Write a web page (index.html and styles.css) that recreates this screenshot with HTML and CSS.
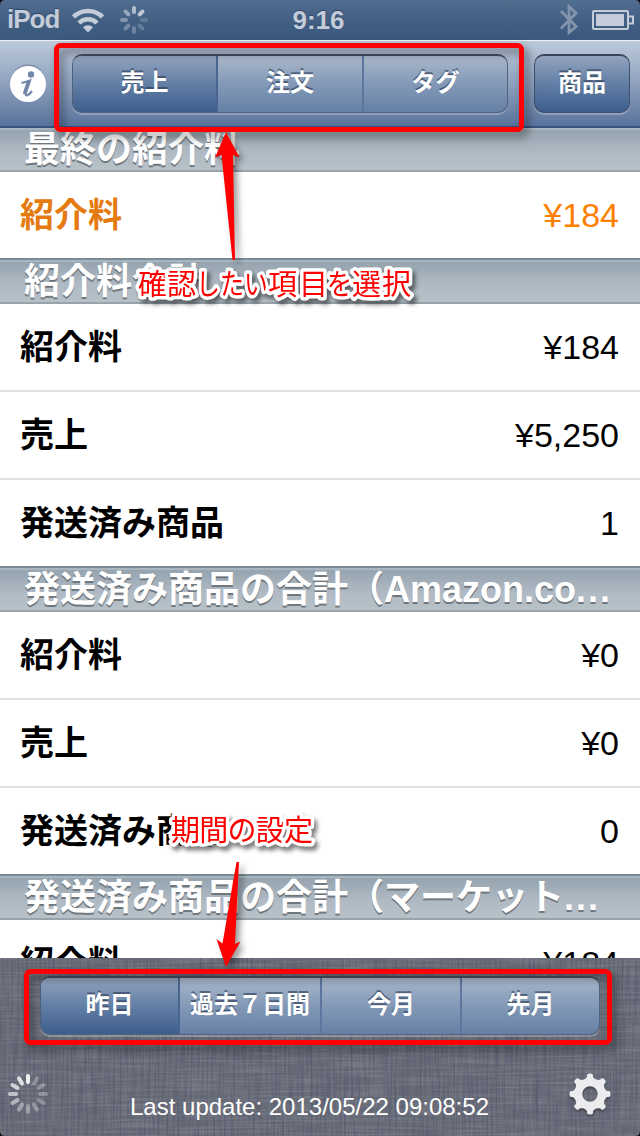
FILE: index.html
```html
<!DOCTYPE html>
<html lang="ja">
<head>
<meta charset="utf-8">
<title>売上</title>
<link rel="stylesheet" href="styles.css">
</head>
<body>
<div class="screen">
  <header class="status">
    <div class="carrier">
      <span class="device">iPod</span>
      <svg class="wifi" width="34" height="26" viewBox="0 0 34 26">
        <g fill="none" stroke="#c3ccd8" stroke-width="4.500">
          <path d="M2.500 10a20.500 20.500 0 0 1 29 0"/>
          <path d="M8 16a12.700 12.700 0 0 1 18 0"/>
        </g>
        <path d="M17 25.500l-5-5.200a7 7 0 0 1 10 0z" fill="#c3ccd8"/>
      </svg>
      <svg class="activity" width="28" height="28" viewBox="-14 -14 28 28">
        <g stroke="#c3ccd8" stroke-width="4" stroke-linecap="round">
          <path d="M0-8V-12" opacity=".85"/>
          <path d="M0-8V-12" opacity=".95" transform="rotate(45)"/>
          <path d="M0-8V-12" opacity=".25" transform="rotate(90)"/>
          <path d="M0-8V-12" opacity=".28" transform="rotate(135)"/>
          <path d="M0-8V-12" opacity=".35" transform="rotate(180)"/>
          <path d="M0-8V-12" opacity=".42" transform="rotate(225)"/>
          <path d="M0-8V-12" opacity=".5" transform="rotate(270)"/>
          <path d="M0-8V-12" opacity=".65" transform="rotate(315)"/>
        </g>
      </svg>
    </div>
    <div class="clock">9:16</div>
    <div class="power">
      <svg width="18" height="32" viewBox="0 0 18 32"><path d="M1 7l15 15.500-7 6V2.500l7 6.500L1 24.500" fill="none" stroke="#8494ad" stroke-width="2.800"/></svg>
      <svg width="42" height="20" viewBox="0 0 42 20"><rect x="1" y="1" width="35" height="18" rx="1" fill="none" stroke="#c3ccd8" stroke-width="2"/><rect x="4" y="4" width="28" height="12" fill="#c3ccd8"/><path d="M37 6.500h4v7h-4" fill="none" stroke="#c3ccd8" stroke-width="2"/></svg>
    </div>
  </header>

  <nav class="navbar">
    <svg class="info" width="36" height="38" viewBox="0 0 36 38">
      <circle cx="18" cy="18" r="17.500" fill="#61718b" opacity=".6"/>
      <circle cx="18" cy="20" r="18" fill="#fff"/>
      <circle cx="21" cy="10.500" r="3.200" fill="#7188aa"/>
      <path d="M11.500 19c2.500-.4 5.500-1.300 8.500-2.500L15.800 29c-1 4.200 2.800 2.600 6.200-2" fill="none" stroke="#7188aa" stroke-width="2.200"/>
      <path d="M18.700 17.500L14.500 30" stroke="#7188aa" stroke-width="3.800"/>
    </svg>
    <div class="segments segments-top">
      <button class="segment active">売上</button>
      <button class="segment">注文</button>
      <button class="segment">タグ</button>
    </div>
    <button class="product">商品</button>
  </nav>

  <main class="list">
    <h2 class="heading"><span>最終の紹介料</span></h2>
    <div class="row earned last"><b>紹介料</b><span>¥184</span></div>
    <h2 class="heading"><span>紹介料合計</span></h2>
    <div class="row"><b>紹介料</b><span>¥184</span></div>
    <div class="row"><b>売上</b><span>¥5,250</span></div>
    <div class="row last"><b>発送済み商品</b><span>1</span></div>
    <h2 class="heading"><span>発送済み商品の合計（Amazon.co<i>...</i></span></h2>
    <div class="row"><b>紹介料</b><span>¥0</span></div>
    <div class="row"><b>売上</b><span>¥0</span></div>
    <div class="row last"><b>発送済み商品</b><span>0</span></div>
    <h2 class="heading"><span>発送済み商品の合計（マーケット<i>...</i></span></h2>
    <div class="row"><b>紹介料</b><span>¥184</span></div>
  </main>

  <footer class="footer">
    <svg class="linen" width="640" height="178">
      <filter id="weft" x="0" y="0" width="100%" height="100%"><feTurbulence type="fractalNoise" baseFrequency=".018 .45" numOctaves="2" seed="4"/><feColorMatrix values="0 0 0 0 1  0 0 0 0 1  0 0 0 0 1  1.300 0 0 0 -.5"/></filter>
      <filter id="warp" x="0" y="0" width="100%" height="100%"><feTurbulence type="fractalNoise" baseFrequency=".45 .018" numOctaves="2" seed="9"/><feColorMatrix values="0 0 0 0 0  0 0 0 0 0  0 0 0 0 .05  1.500 0 0 0 -.6"/></filter>
      <rect width="640" height="178" filter="url(#weft)"/>
      <rect width="640" height="178" filter="url(#warp)"/>
    </svg>
    <div class="segments segments-bottom">
      <button class="segment active">昨日</button>
      <button class="segment">過去７日間</button>
      <button class="segment">今月</button>
      <button class="segment">先月</button>
    </div>
    <div class="tools">
      <svg width="40" height="40" viewBox="-20 -20 40 40">
        <g stroke="#fff" stroke-width="4" stroke-linecap="round">
          <path d="M0-12V-18" opacity=".9"/>
          <path d="M0-12V-18" opacity=".28" transform="rotate(30)"/>
          <path d="M0-12V-18" opacity=".28" transform="rotate(60)"/>
          <path d="M0-12V-18" opacity=".28" transform="rotate(90)"/>
          <path d="M0-12V-18" opacity=".28" transform="rotate(120)"/>
          <path d="M0-12V-18" opacity=".3" transform="rotate(150)"/>
          <path d="M0-12V-18" opacity=".33" transform="rotate(180)"/>
          <path d="M0-12V-18" opacity=".4" transform="rotate(210)"/>
          <path d="M0-12V-18" opacity=".5" transform="rotate(240)"/>
          <path d="M0-12V-18" opacity=".6" transform="rotate(270)"/>
          <path d="M0-12V-18" opacity=".7" transform="rotate(300)"/>
          <path d="M0-12V-18" opacity=".8" transform="rotate(330)"/>
        </g>
      </svg>
      <div class="updated">Last update: 2013/05/22 09:08:52</div>
      <svg class="gear" width="42" height="42" viewBox="-21 -21 42 42">
        <circle r="11.700" fill="none" stroke="#ececee" stroke-width="8"/>
        <g fill="#ececee">
          <path id="tooth" d="M-6.500-13.500L-3-17V-19Q-2.500-20.500-1-20.500H1Q2.500-20.500 3-19V-17L6.500-13.500z"/>
          <use href="#tooth" transform="rotate(45)"/><use href="#tooth" transform="rotate(90)"/><use href="#tooth" transform="rotate(135)"/><use href="#tooth" transform="rotate(180)"/><use href="#tooth" transform="rotate(225)"/><use href="#tooth" transform="rotate(270)"/><use href="#tooth" transform="rotate(315)"/>
        </g>
      </svg>
    </div>
  </footer>

  <svg class="notes" width="640" height="1136" viewBox="0 0 640 1136">
    <g class="mark">
      <rect x="56.500" y="45.500" width="465" height="84" rx="4"/>
      <rect x="26.500" y="971.500" width="583" height="71" rx="4"/>
    </g>
    <g class="arrow">
      <path d="M226 132L239.500 157.500 233 155 235 260H232.500L221.500 155 215 157.500z"/>
      <path d="M236.500 862H239L235 944 240.500 941.500 226 967 216.500 939 222.500 943.500z"/>
    </g>
    <g class="note">
      <text x="138" y="295" textLength="58">確認</text>
      <text x="196" y="295" textLength="72" lengthAdjust="spacingAndGlyphs">したい</text>
      <text x="268" y="295" textLength="60">項目</text>
      <text x="327" y="295" textLength="25" lengthAdjust="spacingAndGlyphs">を</text>
      <text x="352" y="295" textLength="59">選択</text>
      <text x="171" y="841" textLength="142">期間の設定</text>
    </g>
    <path d="M0 0h5Q0 0 0 5zM640 0h-5Q640 0 640 5zM0 1136h5Q0 1136 0 1131zM640 1136h-5Q640 1136 640 1131z"/>
  </svg>
</div>
</body>
</html>
```
FILE: styles.css
```css
* { box-sizing: border-box; }
body { margin: 0; font-family: "Liberation Sans", "Noto Sans CJK JP", sans-serif; }
button { font: inherit; border: 0; padding: 0; margin: 0; background: none; }
svg { display: block; flex: none; }

.screen { position: relative; width: 640px; height: 1136px; overflow: hidden; display: flex; flex-direction: column; background: #fff; }

.status { height: 40px; flex: none; display: grid; grid-template-columns: 1fr auto 1fr; align-items: center; padding: 0 6px 0 7px; background: linear-gradient(#516e91, #3f5c81 65%, #3b587e); color: #c3ccd8; font-size: 26px; font-weight: bold; line-height: 38px; text-shadow: 0 -1px 1px #2c4566; }
.carrier, .power { display: flex; align-items: center; }
.device { width: 64px; letter-spacing: -1px; padding-bottom: 2px; }
.wifi { margin-top: -1px; }
.activity { margin-left: 15px; }
.clock { padding-right: 4px; }
.power { justify-content: flex-end; gap: 14px; }

.navbar { height: 88px; flex: none; display: flex; align-items: flex-start; padding: 13px 10px 0; border-top: 1px solid #edf1f6; border-bottom: 2px solid #37537f; background: linear-gradient(#bccada, #8ea0bd 50%, #5a739c); }
.info { margin-top: 10px; }

.segments { display: grid; height: 59px; border-radius: 10px; border: 1px solid #50627d; border-top: 2px solid #454e5e; overflow: hidden; box-shadow: 0 2px 0 rgba(255,255,255,.25); background: linear-gradient(#a9b7ca, #8399b7 50%, #6580a5); }
.segments-top { width: 436px; margin-left: 26px; grid-template-columns: 143px 146px 1fr; }
.segment { color: #fff; font-size: 24px; font-weight: bold; line-height: 52px; padding: 1px 0 3px; text-shadow: 0 -2px 0 rgba(40,55,80,.6); white-space: nowrap; border-left: 2px solid #5c76a0; }
.segment:first-child { border-left: 0; }
.active { background: linear-gradient(#93a4bf, #6682a8 45%, #3e5d8b); }
.active + .segment { border-left-color: #49648f; }
.product { width: 96px; height: 59px; margin-left: 26px; border-radius: 10px; border: 1px solid #40516c; border-top: 2px solid #3b4558; box-shadow: 0 2px 0 rgba(255,255,255,.25); background: linear-gradient(#93a4bf, #6682a8 45%, #3e5d8b); color: #fff; font-size: 24px; font-weight: bold; line-height: 52px; padding: 1px 0 3px; text-shadow: 0 -2px 0 rgba(40,55,80,.6); }

.list { flex: 1; min-height: 0; overflow: hidden; display: flex; flex-direction: column; }
.heading { flex: none; height: 46px; margin: 0; padding: 1px 24px 0; border-top: 2px solid #7b8b96; border-bottom: 2px solid #98a4ad; box-shadow: inset 0 2px 0 #a9b6bf; background: linear-gradient(#93a2ad, #b0bac4 60%, #b7c1c7); color: #fff; font-size: 36px; font-weight: 600; line-height: 42px; text-shadow: 0 2px 0 #70777d; white-space: nowrap; overflow: hidden; }
.heading:first-child { height: 44px; border-top: 0; }
.heading i { font-style: normal; letter-spacing: 2px; }
.row { flex: none; height: 88px; display: flex; justify-content: space-between; align-items: center; padding: 0 21px 0 20px; border-bottom: 2px solid #e0e0e0; color: #000; font-size: 34px; line-height: 86px; }
.row.last { height: 86px; border-bottom: 0; }
.earned b { color: #e57b10; }
.earned span { color: #ff8000; }

.footer { position: relative; height: 178px; flex: none; padding: 18px 8px 0 8px; background: #686c77; }
.linen { position: absolute; left: 0; top: 0; opacity: .24; }
.segments-bottom { position: relative; width: 560px; margin-left: 32px; grid-template-columns: 137px 142px 140px 1fr; }
.tools { position: relative; display: flex; justify-content: space-between; align-items: center; margin-top: 38px; height: 42px; padding-right: 21px; }
.updated { color: #fff; font-size: 24px; line-height: 28px; padding: 25px 0 0; margin-left: 2px; white-space: nowrap; }
.gear { filter: drop-shadow(0 2px 1px rgba(0,0,0,.35)); }

.notes { position: absolute; left: 0; top: 0; pointer-events: none; }
.mark { fill: none; stroke: #f00; stroke-width: 5; filter: drop-shadow(4px 5px 4px rgba(0,0,0,.45)); }
.arrow { fill: #f00; filter: drop-shadow(4px 4px 3px rgba(0,0,0,.4)); }
.note { fill: #f00; stroke: #fff; stroke-width: 7px; stroke-linejoin: round; paint-order: stroke; font-family: "Noto Sans CJK JP", sans-serif; font-size: 29px; font-weight: 400; filter: drop-shadow(3px 4px 2px rgba(0,0,0,.5)); }
```
